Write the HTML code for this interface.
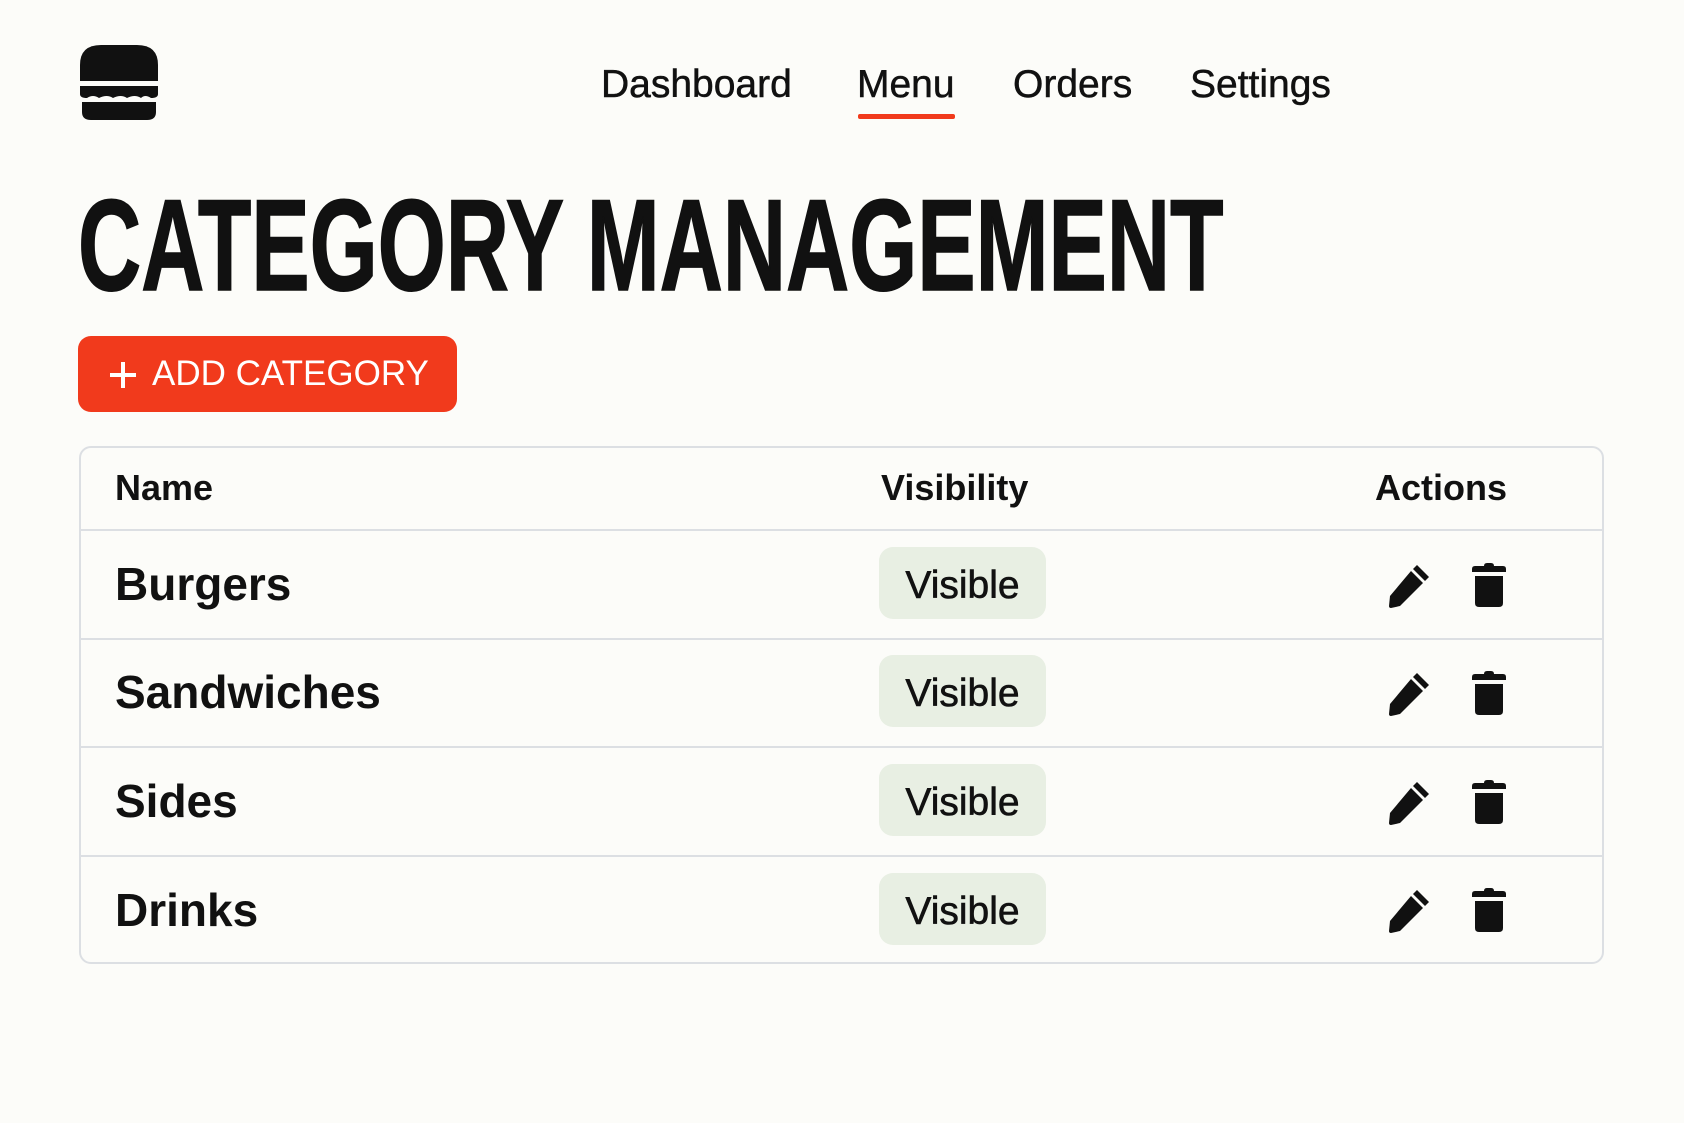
<!DOCTYPE html>
<html><head><meta charset="utf-8"><style>
*{box-sizing:border-box;margin:0;padding:0}
body{width:1684px;height:1123px;background:#fcfcf9;font-family:"Liberation Sans",sans-serif;color:#111;position:relative;overflow:hidden}
.abs{position:absolute}
.nav{font-size:39px;top:63px;white-space:nowrap;-webkit-text-stroke:0.5px #111}
h1{position:absolute;left:78px;top:180px;font-weight:bold;font-size:130px;line-height:130px;white-space:nowrap;transform:scaleX(0.673);transform-origin:left;-webkit-text-stroke:1.5px #111}
.btn{left:78px;top:336px;width:379px;height:76px;background:#f13a1c;border-radius:13px;color:#fff;font-size:35px;line-height:76px;white-space:nowrap}
.table{left:79px;top:446px;width:1525px;height:518px;border:2px solid #dcdfe3;border-radius:12px}
.hdr{font-size:36px;font-weight:bold;top:467px}
.line{left:81px;width:1521px;height:2px;background:#dcdfe3}
.name{left:115px;font-size:46px;font-weight:bold}
.badge{left:879px;width:167px;height:72px;background:#e8efe3;border-radius:14px;font-size:39px;line-height:78px;text-align:center;-webkit-text-stroke:0.6px #111}
</style></head><body>
<svg class="abs" style="left:79px;top:45px" width="80" height="76" viewBox="0 0 80 76">
<path d="M1 36 V20 Q1 0 22 0 H58 Q79 0 79 20 V36 Z" fill="#111"/>
<rect x="1" y="41" width="78" height="8" fill="#111"/>
<path d="M1 49 H79 Q79 53 72 53 Q66 49 62 53 Q56 49 48 53 Q42 49 34 53 Q28 49 20 53 Q14 49 8 53 Q1 53 1 49Z" fill="#111"/>
<path d="M3 57 H77 V67 Q77 75 68 75 H12 Q3 75 3 67 Z" fill="#111"/>
</svg>
<div class="abs nav" style="left:601px">Dashboard</div>
<div class="abs nav" style="left:857px">Menu</div>
<div class="abs" style="left:858px;top:114px;width:97px;height:5px;background:#f13a1c;border-radius:2px"></div>
<div class="abs nav" style="left:1013px">Orders</div>
<div class="abs nav" style="left:1190px">Settings</div>
<h1>CATEGORY MANAGEMENT</h1>
<div class="abs btn"><svg class="abs" style="left:32px;top:26px" width="26" height="26"><rect x="11" y="0" width="4" height="26" fill="#fff"/><rect x="0" y="11" width="26" height="4" fill="#fff"/></svg><span class="abs" style="left:74px">ADD CATEGORY</span></div>
<div class="abs table"></div>
<div class="abs hdr" style="left:115px">Name</div>
<div class="abs hdr" style="left:881px">Visibility</div>
<div class="abs hdr" style="left:1375px">Actions</div>
<div class="abs line" style="top:529px"></div>
<div class="abs line" style="top:638px"></div>
<div class="abs line" style="top:746px"></div>
<div class="abs line" style="top:855px"></div>

<div class="abs name" style="top:557px">Burgers</div>
<div class="abs name" style="top:665px">Sandwiches</div>
<div class="abs name" style="top:774px">Sides</div>
<div class="abs name" style="top:883px">Drinks</div>

<div class="abs badge" style="top:547px">Visible</div>
<div class="abs badge" style="top:655px">Visible</div>
<div class="abs badge" style="top:764px">Visible</div>
<div class="abs badge" style="top:873px">Visible</div>

<svg width="0" height="0" style="position:absolute"><defs>
<g id="pen"><path d="M29 2 L41 14 L37 18 L25 6 Z" fill="#111"/><path d="M23 8 L35 20 L12 43 L3 45 Q1 45 1 43 L2 33 Z" fill="#111"/></g>
<g id="trash"><path d="M12 3 Q12 0 15 0 H19 Q22 0 22 3 H31 Q34 3 34 6 V9 H0 V6 Q0 3 3 3 Z" fill="#111"/><path d="M3 13 H31 V40 Q31 44 27 44 H7 Q3 44 3 40 Z" fill="#111"/></g>
</defs></svg>
<svg class="abs" style="left:1388px;top:563px" width="44" height="46"><use href="#pen"/></svg>
<svg class="abs" style="left:1472px;top:563px" width="36" height="46"><use href="#trash"/></svg>
<svg class="abs" style="left:1388px;top:671px" width="44" height="46"><use href="#pen"/></svg>
<svg class="abs" style="left:1472px;top:671px" width="36" height="46"><use href="#trash"/></svg>
<svg class="abs" style="left:1388px;top:780px" width="44" height="46"><use href="#pen"/></svg>
<svg class="abs" style="left:1472px;top:780px" width="36" height="46"><use href="#trash"/></svg>
<svg class="abs" style="left:1388px;top:888px" width="44" height="46"><use href="#pen"/></svg>
<svg class="abs" style="left:1472px;top:888px" width="36" height="46"><use href="#trash"/></svg>
</body></html>
